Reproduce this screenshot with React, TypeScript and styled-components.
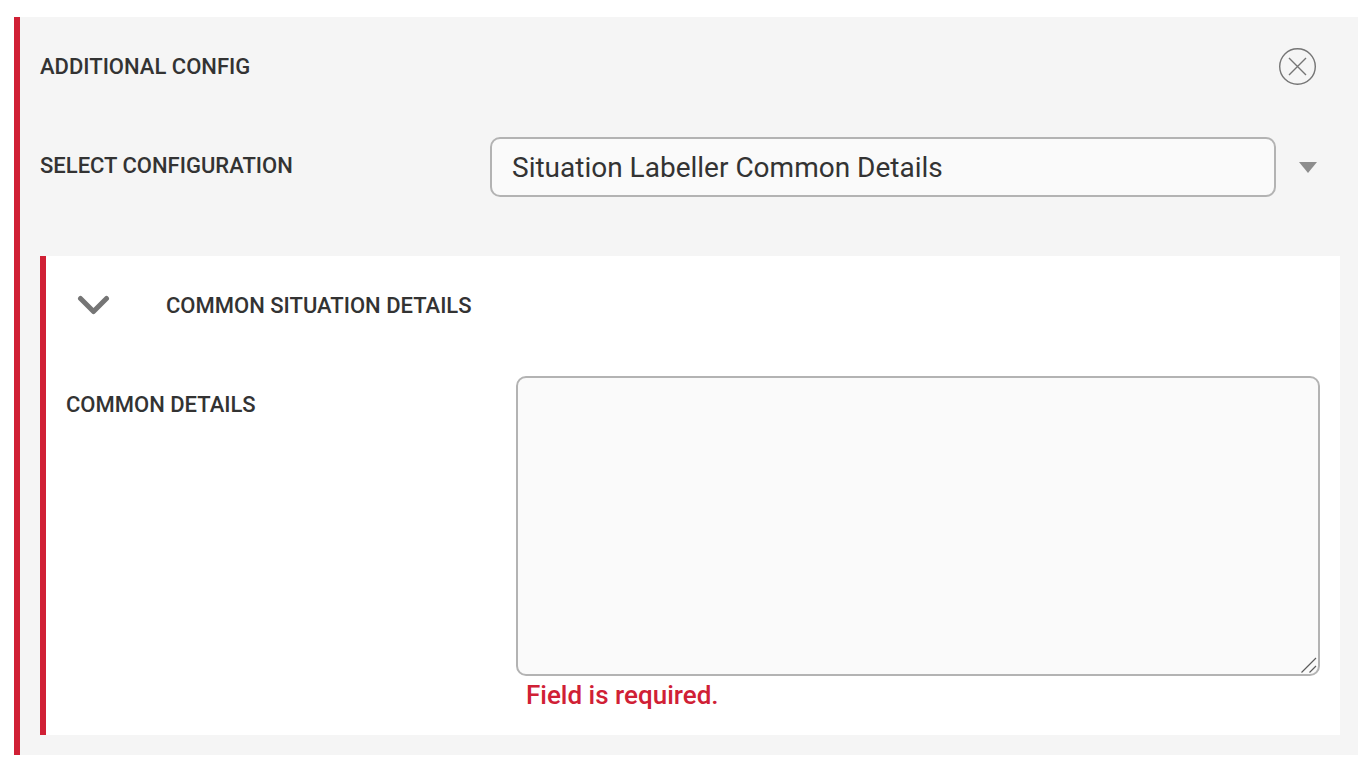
import React from 'react';
import styled, { createGlobalStyle } from 'styled-components';

const GlobalStyle = createGlobalStyle`
  html, body {
    margin: 0;
    padding: 0;
    background: #fff;
    font-family: 'Roboto', 'Liberation Sans', sans-serif;
  }
`;

const Page = styled.div`
  padding: 17px 0 0 14px;
  height: 760px;
  box-sizing: border-box;
  overflow: hidden;
`;

const Panel = styled.section`
  box-sizing: border-box;
  height: 738px;
  background: #f5f5f5;
  border-left: 6px solid #d02035;
  padding: 0 18px 20px 20px;
`;

const HeaderRow = styled.div`
  display: flex;
  align-items: center;
  justify-content: space-between;
  height: 98px;
  padding: 0 24px 0 0;
`;

const Label = styled.div`
  font-size: 22px;
  font-weight: 500;
  line-height: 26px;
  color: #333;
`;

const PanelTitle = styled(Label)`
  padding-top: 2px;
`;

const CloseButton = styled.button`
  width: 37px;
  height: 37px;
  padding: 0;
  border: 0;
  background: none;
  display: block;
`;

const ConfigRow = styled.div`
  display: flex;
  align-items: flex-start;
  height: 141px;
  padding-top: 22px;
  box-sizing: border-box;
`;

const ConfigLabel = styled(Label)`
  width: 450px;
  padding-top: 16px;
`;

const SelectWrap = styled.div`
  display: flex;
  align-items: center;
  gap: 23px;
`;

const Select = styled.select`
  appearance: none;
  box-sizing: border-box;
  width: 786px;
  height: 60px;
  padding: 0 20px;
  background: #fafafa;
  border: 2px solid #b3b3b3;
  border-radius: 10px;
  font: 400 28px 'Roboto', sans-serif;
  color: #333;
  outline: none;
`;

const Caret = styled.span`
  width: 0;
  height: 0;
  border-left: 9px solid transparent;
  border-right: 9px solid transparent;
  border-top: 11px solid #8d8d8d;
`;

const Section = styled.div`
  box-sizing: border-box;
  height: 479px;
  background: #fff;
  border-left: 6px solid #d02035;
`;

const SectionHeader = styled.div`
  display: flex;
  align-items: center;
  height: 99px;
  padding-left: 31px;
  gap: 56px;
`;

const Chevron = styled.svg`
  width: 33px;
  height: 21px;
  display: block;
`;

const FieldRow = styled.div`
  display: flex;
  align-items: flex-start;
  padding: 21px 20px 0 20px;
`;

const FieldLabel = styled(Label)`
  width: 450px;
  padding-top: 16px;
`;

const FieldBody = styled.div`
  flex: 1;
  min-width: 0;
`;

const TextAreaWrap = styled.div`
  position: relative;
  width: 804px;
  height: 300px;
`;

const TextArea = styled.textarea`
  display: block;
  box-sizing: border-box;
  width: 100%;
  height: 100%;
  background: #fafafa;
  border: 2px solid #b3b3b3;
  border-radius: 10px;
  outline: none;
  resize: none;
`;

const ResizeGrip = styled.svg`
  position: absolute;
  right: 3px;
  bottom: 3px;
  width: 16px;
  height: 16px;
  pointer-events: none;
`;

const ErrorText = styled.div`
  margin-top: 4px;
  padding-left: 10px;
  font-size: 26px;
  font-weight: 500;
  line-height: 30px;
  color: #d02035;
`;

export default function App() {
  return (
    <>
      <GlobalStyle />
      <Page>
        <Panel>
          <HeaderRow>
            <PanelTitle>ADDITIONAL CONFIG</PanelTitle>
            <CloseButton aria-label="Close">
              <svg width="37" height="37" viewBox="0 0 37 37" fill="none" stroke="#757575">
                <circle cx="18.5" cy="18.5" r="17.8" strokeWidth="1.4" />
                <path d="M10 10 L27 27 M27 10 L10 27" strokeWidth="1.4" />
              </svg>
            </CloseButton>
          </HeaderRow>
          <ConfigRow>
            <ConfigLabel>SELECT CONFIGURATION</ConfigLabel>
            <SelectWrap>
              <Select defaultValue="common">
                <option value="common">Situation Labeller Common Details</option>
              </Select>
              <Caret />
            </SelectWrap>
          </ConfigRow>
          <Section>
            <SectionHeader>
              <Chevron viewBox="0 0 33 21" fill="none">
                <path d="M3.5 3.5 L16.5 16.5 L29.5 3.5" stroke="#757575" strokeWidth="5" strokeLinecap="round" strokeLinejoin="round" />
              </Chevron>
              <Label>COMMON SITUATION DETAILS</Label>
            </SectionHeader>
            <FieldRow>
              <FieldLabel>COMMON DETAILS</FieldLabel>
              <FieldBody>
                <TextAreaWrap>
                  <TextArea />
                  <ResizeGrip viewBox="0 0 16 16" fill="none" stroke="#5c5c5c" strokeWidth="1.2">
                    <path d="M0.5 15.5 L15 1 M8.5 15.5 L15 9" />
                  </ResizeGrip>
                </TextAreaWrap>
                <ErrorText>Field is required.</ErrorText>
              </FieldBody>
            </FieldRow>
          </Section>
        </Panel>
      </Page>
    </>
  );
}
